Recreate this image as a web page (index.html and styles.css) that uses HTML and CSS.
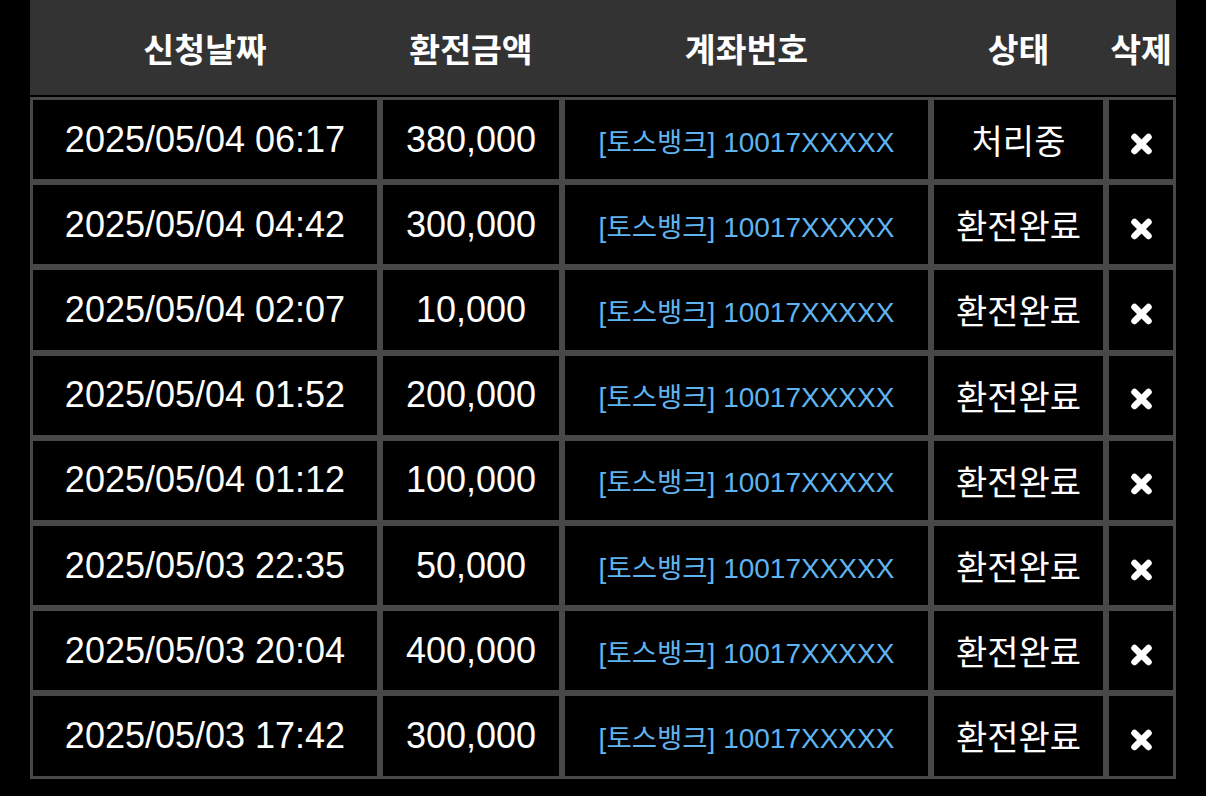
FILE: index.html
```html
<!DOCTYPE html>
<html lang="ko">
<head>
<meta charset="utf-8">
<title>환전내역</title>
<link rel="stylesheet" href="styles.css">
</head>
<body>
<table class="history">
  <colgroup>
    <col class="c-date">
    <col class="c-amount">
    <col class="c-account">
    <col class="c-status">
    <col class="c-del">
  </colgroup>
  <thead>
    <tr>
      <th>신청날짜</th>
      <th>환전금액</th>
      <th>계좌번호</th>
      <th>상태</th>
      <th>삭제</th>
    </tr>
  </thead>
  <tbody>
    <tr>
      <td class="date">2025/05/04 06:17</td>
      <td class="amount">380,000</td>
      <td class="account">[<span class="bank">토스뱅크</span>] 10017XXXXX</td>
      <td class="status">처리중</td>
      <td class="del"><svg class="x" viewBox="0 0 24 24" width="25" height="24"><path d="M5 5 L19 19 M19 5 L5 19"/></svg></td>
    </tr>
    <tr>
      <td class="date">2025/05/04 04:42</td>
      <td class="amount">300,000</td>
      <td class="account">[<span class="bank">토스뱅크</span>] 10017XXXXX</td>
      <td class="status">환전완료</td>
      <td class="del"><svg class="x" viewBox="0 0 24 24" width="25" height="24"><path d="M5 5 L19 19 M19 5 L5 19"/></svg></td>
    </tr>
    <tr>
      <td class="date">2025/05/04 02:07</td>
      <td class="amount">10,000</td>
      <td class="account">[<span class="bank">토스뱅크</span>] 10017XXXXX</td>
      <td class="status">환전완료</td>
      <td class="del"><svg class="x" viewBox="0 0 24 24" width="25" height="24"><path d="M5 5 L19 19 M19 5 L5 19"/></svg></td>
    </tr>
    <tr>
      <td class="date">2025/05/04 01:52</td>
      <td class="amount">200,000</td>
      <td class="account">[<span class="bank">토스뱅크</span>] 10017XXXXX</td>
      <td class="status">환전완료</td>
      <td class="del"><svg class="x" viewBox="0 0 24 24" width="25" height="24"><path d="M5 5 L19 19 M19 5 L5 19"/></svg></td>
    </tr>
    <tr>
      <td class="date">2025/05/04 01:12</td>
      <td class="amount">100,000</td>
      <td class="account">[<span class="bank">토스뱅크</span>] 10017XXXXX</td>
      <td class="status">환전완료</td>
      <td class="del"><svg class="x" viewBox="0 0 24 24" width="25" height="24"><path d="M5 5 L19 19 M19 5 L5 19"/></svg></td>
    </tr>
    <tr>
      <td class="date">2025/05/03 22:35</td>
      <td class="amount">50,000</td>
      <td class="account">[<span class="bank">토스뱅크</span>] 10017XXXXX</td>
      <td class="status">환전완료</td>
      <td class="del"><svg class="x" viewBox="0 0 24 24" width="25" height="24"><path d="M5 5 L19 19 M19 5 L5 19"/></svg></td>
    </tr>
    <tr>
      <td class="date">2025/05/03 20:04</td>
      <td class="amount">400,000</td>
      <td class="account">[<span class="bank">토스뱅크</span>] 10017XXXXX</td>
      <td class="status">환전완료</td>
      <td class="del"><svg class="x" viewBox="0 0 24 24" width="25" height="24"><path d="M5 5 L19 19 M19 5 L5 19"/></svg></td>
    </tr>
    <tr>
      <td class="date">2025/05/03 17:42</td>
      <td class="amount">300,000</td>
      <td class="account">[<span class="bank">토스뱅크</span>] 10017XXXXX</td>
      <td class="status">환전완료</td>
      <td class="del"><svg class="x" viewBox="0 0 24 24" width="25" height="24"><path d="M5 5 L19 19 M19 5 L5 19"/></svg></td>
    </tr>
  </tbody>
</table>
</body>
</html>
```
FILE: styles.css
```css
html, body {
  margin: 0;
  padding: 0;
  background: #000;
}

body {
  padding: 0 30px;
  font-family: "Liberation Sans", "Noto Sans CJK KR", sans-serif;
  color: #fff;
}

.history {
  width: 1146px;
  table-layout: fixed;
  border-collapse: separate;
  border-spacing: 0;
}

.c-date { width: 350px; }
.c-amount { width: 182px; }
.c-account { width: 369px; }
.c-status { width: 175px; }
.c-del { width: 70px; }

.history th {
  height: 95px;
  padding: 0;
  background: #333;
  border-bottom: 2px solid #000;
  font-family: "Noto Sans CJK KR", "Liberation Sans", sans-serif;
  font-weight: 700;
  font-size: 33.5px;
  color: #fff;
  text-align: center;
  vertical-align: middle;
  white-space: nowrap;
  overflow: visible;
}

.history td {
  box-sizing: border-box;
  height: 85.2px;
  padding: 0;
  border: 3px solid #484848;
  text-align: center;
  vertical-align: middle;
  white-space: nowrap;
}

.date,
.amount {
  font-size: 36px;
}

.account {
  font-size: 28px;
  color: #5fb3ee;
}

.bank {
  font-family: "Noto Sans CJK KR", sans-serif;
  font-size: 27.5px;
}

.status {
  font-family: "Noto Sans CJK KR", sans-serif;
  font-size: 34px;
}

.del {
  line-height: 0;
}

.x {
  margin-top: 8px;
  fill: none;
  stroke: #fff;
  stroke-width: 6.5;
  stroke-linecap: round;
}
```
